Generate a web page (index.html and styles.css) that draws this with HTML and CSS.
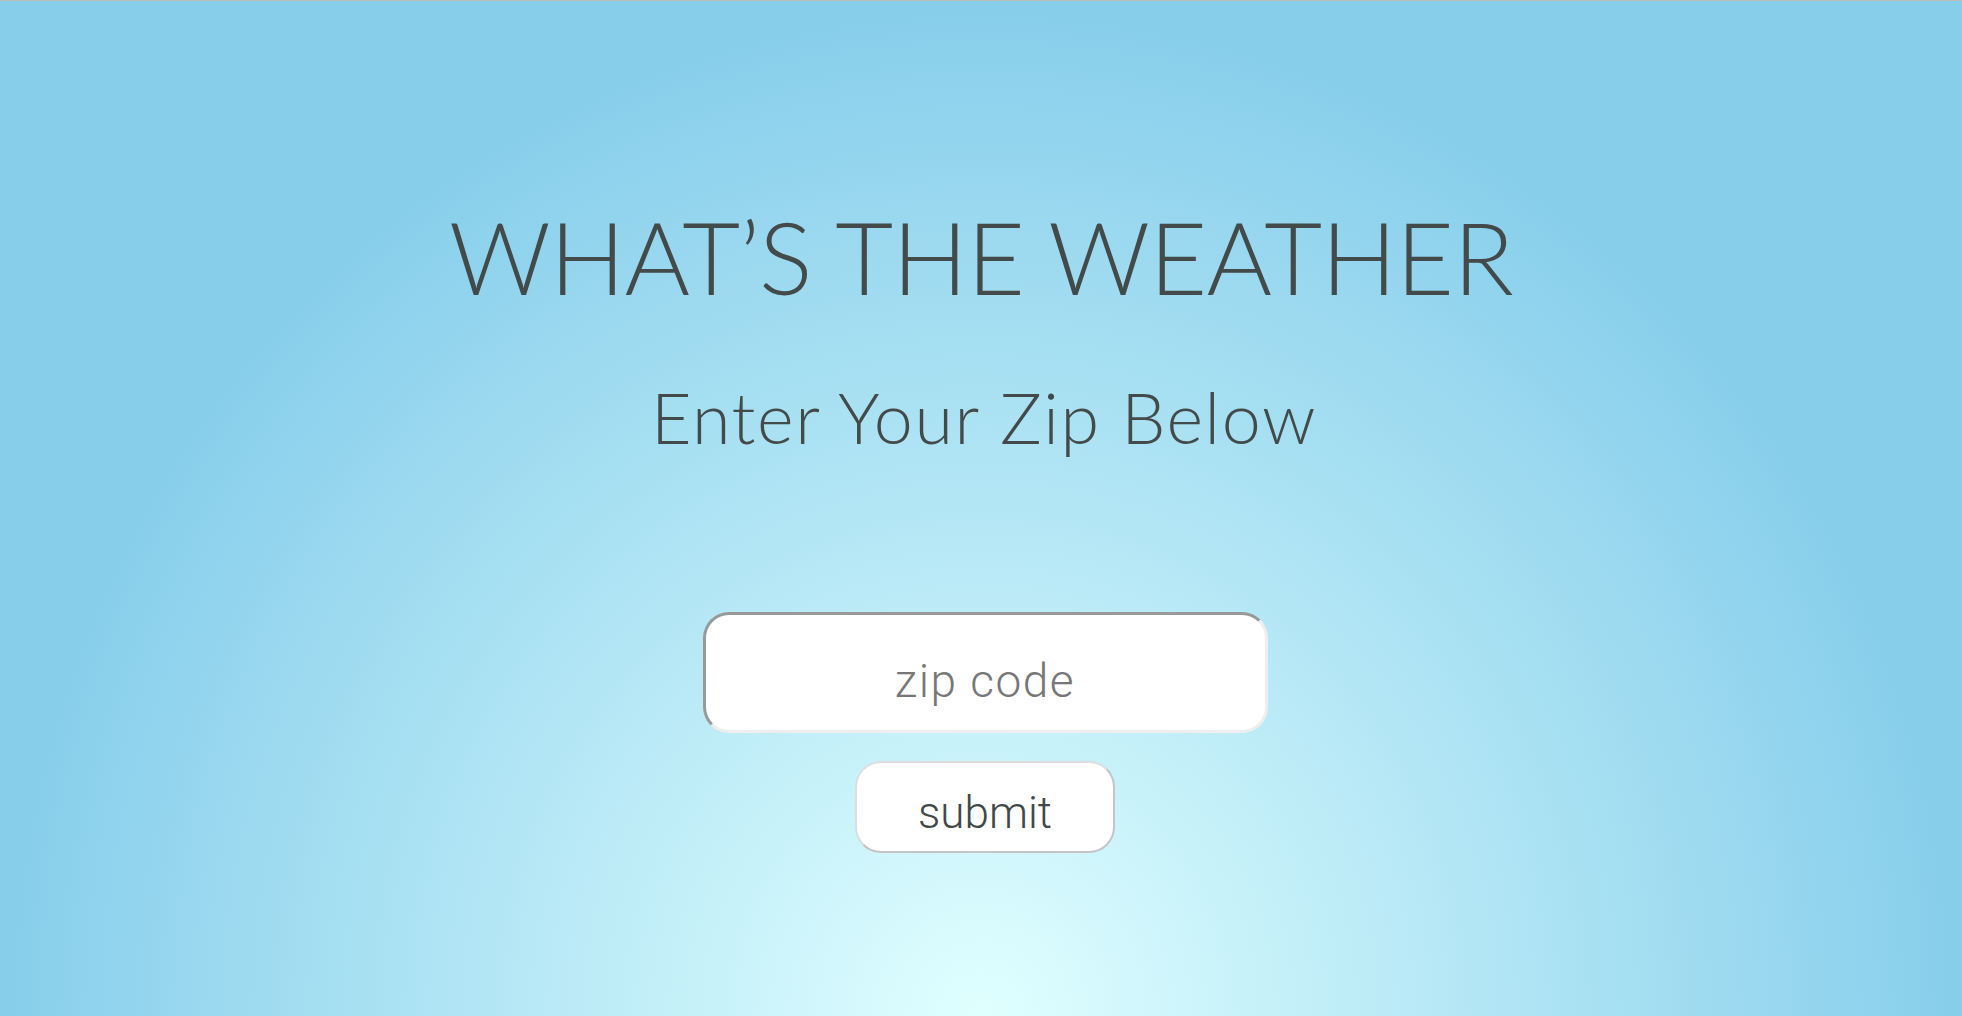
FILE: index.html
```html
<!DOCTYPE html>
<html lang="en">
<head>
<meta charset="utf-8">
<title>What's the Weather</title>
<link rel="stylesheet" href="styles.css">
</head>
<body>
<main class="page">
  <h1 class="title">WHAT’S THE WEATHER</h1>
  <h2 class="subtitle">Enter Your Zip Below</h2>
  <form class="zip-form">
    <input class="zip-input" type="text" placeholder="zip code">
    <button class="submit-btn" type="button">submit</button>
  </form>
</main>
</body>
</html>
```

FILE: styles.css
```css
html, body {
  margin: 0;
  padding: 0;
}

.page {
  box-sizing: border-box;
  min-height: 100vh;
  border-top: 1px solid #bbbbbb;
  background: radial-gradient(farthest-side at 50% 100%, #e0ffff, #87ceeb);
  display: flex;
  flex-direction: column;
  align-items: center;
  padding-top: 205px;
}

.title {
  margin: 0;
  font-family: "Lato", "Liberation Sans", sans-serif;
  font-weight: 300;
  font-size: 100px;
  line-height: 100px;
  letter-spacing: -0.8px;
  color: #424a4a;
}

.subtitle {
  margin: 76px 0 0 6px;
  font-family: "Lato", "Liberation Sans", sans-serif;
  font-weight: 300;
  font-size: 70px;
  line-height: 70px;
  letter-spacing: 1.6px;
  color: #424a4a;
}

.zip-form {
  margin: 160px 0 0 8px;
  display: flex;
  flex-direction: column;
  align-items: center;
  gap: 28px;
}

.zip-input {
  box-sizing: border-box;
  width: 565px;
  height: 121px;
  border: 3px solid;
  border-color: #999999 #eeeeee #eeeeee #999999;
  border-radius: 26px;
  background: #ffffff;
  text-align: center;
  font-family: "Roboto", "Liberation Sans", sans-serif;
  font-weight: 300;
  font-size: 46px;
  letter-spacing: 1.5px;
  color: #444;
  outline: none;
  padding: 16px 0 0;
}

.zip-input::placeholder {
  color: #777777;
}

.submit-btn {
  box-sizing: border-box;
  width: 260px;
  height: 92px;
  border: 2px solid;
  border-color: #dddddd #c4c4c4 #c4c4c4 #dddddd;
  border-radius: 26px;
  background: #ffffff;
  font-family: "Roboto", "Liberation Sans", sans-serif;
  font-weight: 300;
  font-size: 44px;
  color: #404848;
  padding: 12px 0 0;
  cursor: pointer;
}
```
